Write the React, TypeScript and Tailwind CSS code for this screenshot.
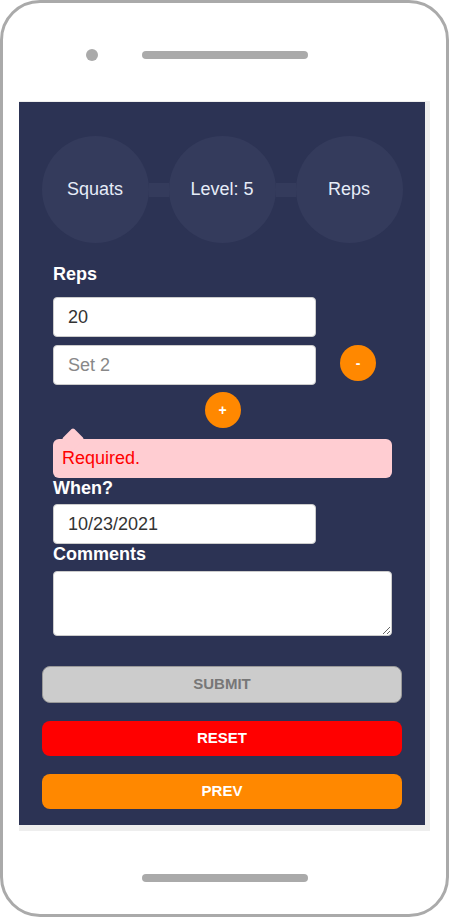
import type { ReactNode } from 'react'

const font = { fontFamily: "'Liberation Sans', Arial, sans-serif" }

function Step({ children }: { children: ReactNode }) {
  return (
    <div className="w-[107px] h-[107px] rounded-full bg-[#343b5c] flex items-center justify-center text-[18px] text-[#e6ecf8] shrink-0">
      {children}
    </div>
  )
}

function Link() {
  return <div className="w-5 h-[14px] bg-[#343b5c] shrink-0" />
}

function RoundBtn({ label }: { label: string }) {
  return (
    <button className="w-9 h-9 rounded-full bg-[#ff8800] text-white text-[14px] font-bold flex items-center justify-center shrink-0">
      {label}
    </button>
  )
}

export default function App() {
  return (
    <div className="w-[449px] h-[917px] bg-white" style={font}>
      <div className="w-[449px] h-[917px] border-[3px] border-[#aaa] rounded-[40px] flex flex-col">
        {/* top: camera + speaker */}
        <div className="h-[98px] pt-[46px] pl-[83px] flex items-start">
          <div className="flex items-center h-3">
            <div className="w-3 h-3 rounded-full bg-[#aaa]" />
            <div className="ml-[44px] w-[166px] h-2 rounded-full bg-[#aaa]" />
          </div>
        </div>

        {/* screen */}
        <div className="ml-[16px] w-[411px] h-[730px] bg-[#eeeeee] pt-px">
          <div className="w-[406px] h-[723px] bg-[#2c3354] flex flex-col">
            <div className="pt-[34px] flex items-center justify-center">
              <Step>Squats</Step>
              <Link />
              <Step>Level: 5</Step>
              <Link />
              <Step>Reps</Step>
            </div>

            <div className="pl-[34px] pr-[33px] flex flex-col">
              <label className="mt-[21px] text-[18px] leading-[20px] font-bold text-white">Reps</label>
              <input
                readOnly
                value="20"
                className="mt-[13px] w-[263px] h-10 bg-white rounded border border-[#ccc] px-[14px] text-[18px] text-[#333] outline-none"
              />
              <div className="mt-2 flex items-start gap-6">
                <input
                  readOnly
                  placeholder="Set 2"
                  className="w-[263px] h-10 bg-white rounded border border-[#ccc] px-[14px] text-[18px] text-[#333] placeholder:text-[#888] outline-none"
                />
                <RoundBtn label="-" />
              </div>
              <div className="mt-[7px] flex justify-center">
                <RoundBtn label="+" />
              </div>

              <div className="relative mt-[11px] h-[39px] rounded-md bg-[#ffcdd2] flex items-center pl-[9px]">
                <div className="absolute -top-2 left-3 w-4 h-4 rotate-45 rounded-[2px] bg-[#ffcdd2]" />
                <span className="relative text-[18px] text-[#ff0000]">Required.</span>
              </div>

              <label className="text-[18px] leading-[20px] font-bold text-white">When?</label>
              <input
                readOnly
                value="10/23/2021"
                className="mt-[6px] w-[263px] h-10 bg-white rounded border border-[#ccc] px-[14px] text-[18px] text-[#333] outline-none"
              />
              <label className="text-[18px] leading-[20px] font-bold text-white">Comments</label>
              <textarea
                readOnly
                className="mt-[7px] w-full h-[65px] bg-white rounded border border-[#ccc] outline-none"
              />
            </div>

            <div className="mt-[30px] mx-[23px] flex flex-col">
              <button className="h-[37px] rounded-lg bg-[#cccccc] border border-[#999] text-[15px] font-bold text-[#777]">
                SUBMIT
              </button>
              <button className="mt-[18px] h-[35px] rounded-lg bg-[#ff0000] text-[15px] font-bold text-white">
                RESET
              </button>
              <button className="mt-[18px] h-[35px] rounded-lg bg-[#ff8800] text-[15px] font-bold text-white">
                PREV
              </button>
            </div>
          </div>
        </div>

        {/* bottom bar */}
        <div className="mt-[43px] flex justify-center">
          <div className="w-[166px] h-2 rounded-full bg-[#aaa]" />
        </div>
      </div>
    </div>
  )
}
